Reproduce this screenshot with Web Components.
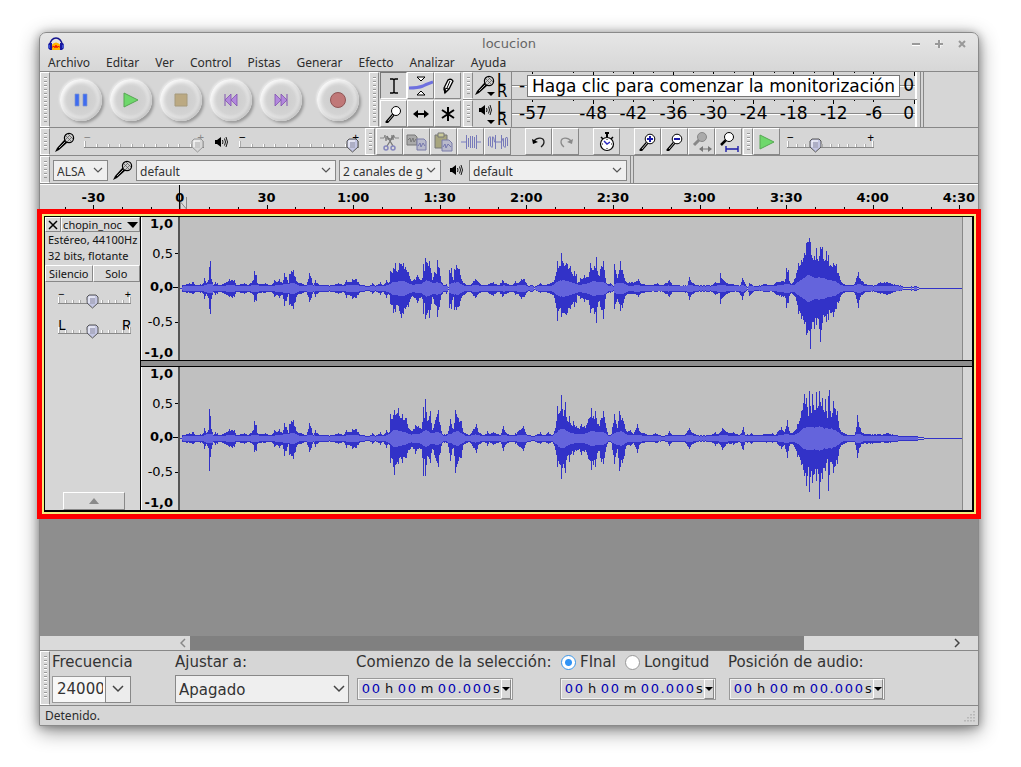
<!DOCTYPE html>
<html lang="es">
<head>
<meta charset="utf-8">
<title>locucion</title>
<style>
  html, body { margin: 0; height: 100%; background: #fff; }
  body {
    display: flex;
    box-sizing: border-box;
    padding: 32px 42px 41px 39px;
    overflow: hidden;
    font-family: "Noto Sans", "Open Sans", sans-serif;
    font-size: 12px;
    color: #2c2c2c;
  }
</style>
</head>
<body>
<audio-window></audio-window>

<script>
const define = (name, html, setup) => {
  const template = document.createElement('template');
  template.innerHTML = html;
  customElements.define(name, class extends HTMLElement {
    constructor() {
      super();
      this.attachShadow({ mode: 'open' });
    }
    connectedCallback() {
      if (this.shadowRoot.childNodes.length) return;
      this.shadowRoot.append(template.content.cloneNode(true));
      if (setup) setup(this, this.shadowRoot);
    }
  });
};

const LENS = '<path d="M2 17 8 10" stroke="#000" stroke-width="3" stroke-linecap="round"/><path d="M3 16 8 10" stroke="#bbb" stroke-width="1"/>';

// every icon is [width, height, body]
const ICONS = {
  logo: [18, 18, '<path d="M3 10a6 7 0 0 1 12 0" fill="none" stroke="#12128c" stroke-width="1.500"/><path d="M4.500 15V10Q9 5 13.500 10v5z" fill="#ffb400"/><path d="M4 12h2l1-1 1 2 1-3 1 3 1-2 1 1h2" fill="none" stroke="#f01800"/><path d="M2 8h3v7H3l-2-2v-3zM16 8h-3v7h2l2-2v-3z" fill="#1717a0"/><path d="M2 10v3M16 10v3" stroke="#6d8df5"/>'],
  min: [10, 10, '<path d="M1 6.500h8" stroke="#fff" stroke-width="1"/><path d="M1 5h8" stroke="#999" stroke-width="2"/>'],
  max: [10, 10, '<path d="M1 6h8M6 1v8" stroke="#fff"/><path d="M1 5h8M5 1v8" stroke="#999" stroke-width="2"/>'],
  close: [10, 10, '<path d="m2 2 6 6m0-6L2 8" stroke="#999" stroke-width="2"/>'],
  pause: [16, 16, '<path d="M2 2h4v12H2zM10 2h4v12h-4z" fill="#3f6cf0" stroke="#8095cf" stroke-width=".7"/>'],
  play: [16, 16, '<path d="M1 1v14l14-7z" fill="#6ed86b" stroke="#56a653"/>'],
  stop: [16, 16, '<path d="M2 2h12v12H2z" fill="#bba982" stroke="#a69a7c"/>'],
  prev: [16, 16, '<path d="M2 2v12" stroke="#8152b0"/><path d="m8 2-6 6 6 6zM14 2 8 8l6 6z" fill="#b288dc" stroke="#8152b0" stroke-width=".8"/>'],
  next: [16, 16, '<path d="M14 2v12" stroke="#8152b0"/><path d="m8 2 6 6-6 6zM2 2l6 6-6 6z" fill="#b288dc" stroke="#8152b0" stroke-width=".8"/>'],
  record: [16, 16, '<circle cx="8" cy="8" r="7.500" fill="#c07878" stroke="#8f5555"/>'],
  ibeam: [20, 20, '<path d="M6 3h3l1 1 1-1h3M6 17h3l1-1 1 1h3M10 4v12" fill="none" stroke="#000" stroke-width="1.400"/>'],
  envelope: [24, 22, '<path d="M0 13q9 0 14-2 4-2 10-4" fill="none" stroke="#6e70df" stroke-width="3"/><path d="M8 2h8l-4 4zM8 20h8l-4-4z" fill="#fff" stroke="#000"/>'],
  pencil: [20, 20, '<path d="m7 17-1-5 4-8q3-2 5 1l-4 8-4 4z" fill="#fff" stroke="#000" stroke-width="1.300"/><path d="m9 12 3-7M6 12l5 1M7 17l1-3-2-1z" fill="#000" stroke="#000"/>'],
  lens: [18, 18, LENS + '<circle cx="11" cy="6" r="4.500" fill="#fff" stroke="#000"/>'],
  shift: [18, 12, '<path d="M3 6h12" stroke="#000" stroke-width="2"/><path d="m1 6 5-4v8zM17 6l-5-4v8z"/>'],
  star: [16, 16, '<path d="M8 1v14M2 4l12 8M14 4 2 12" stroke="#000" stroke-width="2"/>'],
  mic: [20, 20, '<path d="m0 20 2-4 8-9 3 3-9 8z" fill="#000"/><path d="m4 16 7-7" stroke="#aaa"/><circle cx="14" cy="6" r="4.600" fill="#ccc" stroke="#000" stroke-width="1.200"/><path d="m11 4 5 5M13 2l5 5M15 3l-5 5M17 5l-5 5" stroke="#555" stroke-width=".7"/>'],
  speaker: [14, 14, '<path d="M1 5h2l4-3v10L3 9H1z"/><path d="M8.500 5q1 2 0 4M10.500 3.500q2 3.500 0 7M12 2q3 5 0 10" fill="none" stroke="#000" stroke-width=".9"/>'],
  down: [8, 4, '<path d="M0 0h8L4 4z"/>'],
  cut: [22, 20, '<path d="M1 6h4l1-3 1 6 1-5 1 4 2-2 1 2 1-5 1 5 1-4 1 2h4" fill="none" stroke="#888"/><path d="m8 14 7-11M14 14 8 4" stroke="#777" stroke-width="1.300"/><circle cx="7" cy="16" r="2" fill="none" stroke="#8486bd" stroke-width="1.500"/><circle cx="14" cy="16" r="2" fill="none" stroke="#8486bd" stroke-width="1.500"/>'],
  copy: [22, 20, '<path d="M1 3h8l2 2v8H1z" fill="#aaa" stroke="#777"/><path d="m2 8 2-2 1 4 2-4 1 4 2-3" fill="none" stroke="#777"/><path d="M11 7h7l2 2v9h-9z" fill="#b9bacb" stroke="#787aa8"/><path d="m12 14 2-3 1 4 2-4 2 3" fill="none" stroke="#7577ad"/>'],
  paste: [22, 20, '<path d="M2 3h12v13H2z" fill="#a7a57e" stroke="#777"/><path d="M5 1h6v4H5z" fill="#c9c99a" stroke="#777"/><path d="M9 8h7l3 3v8H9z" fill="#b9bacb" stroke="#787aa8"/><path d="m10 15 2-3 1 4 2-4 3 3" fill="none" stroke="#7577ad"/>'],
  trim: [22, 20, '<path d="M1 10h5M17 10h4" stroke="#777ac0"/><path d="M6.500 3v14M8.500 6v9M10.500 4v12M12.500 4v12M14.500 5v11M16.500 3v14" stroke="#777aba"/>'],
  silence: [22, 20, '<path d="M1.500 14V6q2-3 2 0v8q2 3 2 0V5q1-2 2 5h7M8.500 3v14M14.500 3v14M14.500 10l1-3q1-2 1 1v6q2 3 2 0V6q2-2 2 1v7" fill="none" stroke="#777aba"/>'],
  undo: [20, 18, '<path d="M5 8c3-4 10-4 10 1q0 3-3 5" fill="none" stroke="#222" stroke-width="1.300"/><path d="m3 6 1 5 5-2z"/>'],
  redo: [20, 18, '<path d="M15 8C12 4 5 4 5 9q0 3 3 5" fill="none" stroke="#8a8a8a" stroke-width="1.300"/><path d="m17 6-1 5-5-2z" fill="#8a8a8a"/>'],
  timer: [20, 20, '<path d="M8 1h4M10 1v4" stroke="#000" stroke-width="2"/><path d="m4 5 2 2M16 5l-2 2" stroke="#000" stroke-width="1.500"/><circle cx="10" cy="12" r="6.500" fill="#fff" stroke="#000" stroke-width="1.200"/><path d="M10 7v1m0 8v1m-5-5h1m8 0h1" stroke="#111"/><path d="m7 9 3 3 3-2" fill="none" stroke="#2a2ac0" stroke-width="1.500"/>'],
  zoomin: [18, 18, LENS + '<circle cx="11" cy="6" r="4.800" fill="#fff" stroke="#000"/><path d="M8 6h6M11 3v6" stroke="#1a1aa8" stroke-width="2"/>'],
  zoomout: [18, 18, LENS + '<circle cx="11" cy="6" r="4.800" fill="#fff" stroke="#000"/><path d="M8 6h6" stroke="#1a1aa8" stroke-width="2"/>'],
  zoomsel: [20, 20, '<path d="m2 13 5-5" stroke="#888" stroke-width="3"/><circle cx="10" cy="5" r="4.500" fill="#aaa" stroke="#888"/><path d="M8 17h11" stroke="#777"/><path d="m7 17 4-3v6zM20 17l-4-3v6z" fill="#777"/>'],
  zoomfit: [20, 20, '<path d="m2 13 5-5" stroke="#000" stroke-width="2.500"/><circle cx="10" cy="5" r="4.500" fill="#fff" stroke="#000"/><path d="M7 17h12M7 14v6M19 14v6" stroke="#1a1aa8" stroke-width="1.400"/>'],
  cross: [10, 10, '<path d="m1 1 8 8m0-8L1 9" stroke="#000" stroke-width="1.500"/>'],
  bigdown: [11, 6, '<path d="M0 0h11L6 6z"/>'],
  up: [10, 6, '<path d="M0 6h10L5 0z" fill="#8a8a8a"/>'],
  left: [6, 10, '<path d="M5 1 1 5l4 4" fill="none" stroke="#888" stroke-width="1.500"/>'],
  right: [6, 10, '<path d="m1 1 4 4-4 4" fill="none" stroke="#444" stroke-width="1.500"/>'],
  chevron: [12, 8, '<path d="m2 2 4 4 4-4" fill="none" stroke="#555" stroke-width="1.200"/>'],
  bigchevron: [12, 8, '<path d="m1 1 5 5 5-5" fill="none" stroke="#444" stroke-width="1.500"/>'],
  corner: [12, 12, '<path d="M10 1v2M7 4v2m3-2v2M4 7v2m3-2v2m3-2v2M1 10v2m3-2v2m3-2v2m3-2v2" stroke="#b0b0b0" stroke-width="1.500" stroke-dasharray="1.500"/>'],
};

define('app-icon', `
  <style>
    :host { display: inline-flex; flex: none; }
    svg { display: block; }
  </style>
`, (host, root) => {
  const [w, h, body] = ICONS[host.getAttribute('name')];
  root.innerHTML += `<svg width="${w}" height="${h}" viewBox="0 0 ${w} ${h}" aria-hidden="true">${body}</svg>`;
});

define('tool-grip', `
  <style>
    :host {
      display: block;
      flex: none;
      box-sizing: border-box;
      width: 10px;
      align-self: stretch;
      padding: 4px 2px 4px 3px;
      background: #d9d9d9;
      border: 1px solid #fff;
      border-right: 1px solid #888;
    }
    div {
      height: 100%;
      background: repeating-linear-gradient(#999 0 1px, #fff 1px 2px, #d9d9d9 2px 4px);
    }
  </style>
  <div></div>
`);

define('round-button', `
  <style>
    :host { display: block; flex: none; }
    button {
      display: flex;
      align-items: center;
      justify-content: center;
      width: 42px;
      height: 42px;
      padding: 0;
      border: none;
      border-radius: 50%;
      background: radial-gradient(circle at 50% 50%, #cbcbcb 0, #d3d3d3 48%, #e4e4e4 62%, #dadada 71%);
      box-shadow: -1px -1px 2px #ececec, 2px 2px 3px #969696, inset 2px 2px 3px #f8f8f8, inset -2px -2px 3px #c8c8c8;
    }
  </style>
  <button type="button"><slot></slot></button>
`, (host, root) => {
  root.querySelector('button').setAttribute('aria-label', host.getAttribute('label'));
});

define('tool-button', `
  <style>
    :host { display: block; flex: none; width: 27px; height: 27px; }
    button {
      display: flex;
      align-items: center;
      justify-content: center;
      box-sizing: border-box;
      width: 100%;
      height: 100%;
      padding: 0;
      background: #d8d8d8;
      border: 1px solid;
      border-color: #fff #888 #888 #fff;
      font: inherit;
      color: inherit;
    }
    :host([pressed]) button { background: #d2d2d2; border-color: #777 #fff #fff #777; }
  </style>
  <button type="button"><slot></slot></button>
`, (host, root) => {
  const label = host.getAttribute('label');
  if (label) root.querySelector('button').setAttribute('aria-label', label);
});

const knob = (fill, edge) => `url("data:image/svg+xml,${encodeURIComponent(
  `<svg xmlns="http://www.w3.org/2000/svg" width="13" height="15"><path d="M3 1h7l2 2v6l-5.500 5L1 9V3z" fill="${fill}" stroke="${edge}"/><path d="M4 5h5M4 7h5M4 9h5" stroke="${edge}" stroke-opacity=".4"/><path d="M3 9V3h6" fill="none" stroke="#fff"/></svg>`)}")`;

define('level-slider', `
  <style>
    :host { display: grid; flex: none; width: 120px; height: 22px; }
    .ends, .scale, input { grid-area: 1 / 1; min-width: 0; }
    .ends { display: flex; justify-content: space-between; line-height: 14px; color: #000; }
    :host([muted]) .ends { color: #888; }
    .scale {
      align-self: end;
      height: 6px;
      margin-bottom: 5px;
      border-bottom: 1px solid #888;
      display: flex;
      justify-content: space-between;
      align-items: flex-end;
    }
    .scale i { width: 1px; height: 3px; background: #aaa; border-left: 1px solid #fff; }
    .scale i:first-child, .scale i:last-child { height: 6px; }
    input {
      appearance: none;
      align-self: end;
      width: 100%;
      height: 15px;
      margin: 0;
      background: none;
    }
    input::-webkit-slider-thumb {
      appearance: none;
      width: 13px;
      height: 15px;
      border: none;
      background: ${knob('#c3c5e2', '#555')};
    }
    input:disabled::-webkit-slider-thumb { background: ${knob('#d6d6d6', '#999')}; }
  </style>
  <div class="ends"><span></span><span></span></div>
  <div class="scale"></div>
  <input type="range" min="0" max="100">
`, (host, root) => {
  const [low, high] = root.querySelectorAll('span');
  low.textContent = host.getAttribute('low') || '−';
  high.textContent = host.getAttribute('high') || '+';
  root.querySelector('.scale').innerHTML = '<i></i>'.repeat(+host.getAttribute('ticks') || 11);
  const input = root.querySelector('input');
  input.value = host.getAttribute('value');
  input.disabled = host.hasAttribute('muted');
  input.setAttribute('aria-label', host.getAttribute('label'));
});

define('pick-list', `
  <style>
    :host { display: grid; flex: none; font-size: 12px; height: 20px; }
    select, app-icon { grid-area: 1 / 1; }
    select {
      appearance: none;
      box-sizing: border-box;
      width: 100%;
      height: 100%;
      padding: 2px 15px 0 3px;
      border: 1px solid #888;
      border-radius: 0;
      background: #efefef;
      font: inherit;
      color: #333;
    }
    app-icon { justify-self: end; align-self: center; margin-right: 4px; pointer-events: none; z-index: 1; }
  </style>
  <select><option></option></select>
`, (host, root) => {
  root.querySelector('option').textContent = host.getAttribute('value');
  root.querySelector('select').setAttribute('aria-label', host.getAttribute('label'));
  const icon = document.createElement('app-icon');
  icon.setAttribute('name', host.hasAttribute('large') ? 'bigchevron' : 'chevron');
  root.append(icon);
});

define('level-meter', `
  <style>
    :host { display: flex; flex: 1; min-height: 0; border-bottom: 1px solid #888; }
    :host(.last) { border-bottom: none; }
    .source {
      display: flex;
      flex-direction: column;
      align-items: center;
      width: 24px;
      padding-top: 3px;
      box-sizing: border-box;
      position: relative;
    }
    .drop { position: absolute; right: 2px; bottom: 3px; }
    .sides {
      display: flex;
      flex-direction: column;
      justify-content: center;
      width: 13px;
      margin-right: 1px;
      font: 15px/12px "DejaVu Sans", sans-serif;
      color: #000;
    }
    .scale {
      flex: 1;
      display: grid;
      grid-template-columns: 61fr repeat(8, 40fr) 21fr;
      border-left: 1px solid #888;
      border-right: 2px solid #fff;
      background: linear-gradient(#fff, #fff) 0 14px / 100% 1px no-repeat, linear-gradient(#888, #888) 0 13px / 100% 1px no-repeat;
      font: 17px/27px "DejaVu Sans", sans-serif;
      color: #000;
    }
    .scale span {
      text-align: center;
      background: linear-gradient(#000, #000) 50% 0 / 1px 2px no-repeat, linear-gradient(#000, #000) 0 0 / 1px 1px no-repeat;
    }
    .scale span.major { background-size: 1px 4px, 1px 1px; }
    .scale span:first-child { text-align: left; padding-left: 7px; background-position: 20px 0; }
    .scale span:last-child { text-align: right; padding-right: 1px; background-position: 100% 0; }
  </style>
  <tool-grip></tool-grip>
  <div class="source"><app-icon class="drop" name="down"></app-icon></div>
  <div class="sides"><span>L</span><span>R</span></div>
  <div class="scale"></div>
`, (host, root) => {
  const icon = document.createElement('app-icon');
  icon.setAttribute('name', host.getAttribute('icon'));
  root.querySelector('.source').prepend(icon);
  // an idle meter keeps its ticks but only the ends of its scale
  const idle = host.hasAttribute('idle');
  root.querySelector('.scale').innerHTML = [-57, -48, -42, -36, -30, -24, -18, -12, -6, 0]
    .map((db) => {
      const text = !idle || db === 0 ? db : db === -57 ? '-' : '';
      return `<span${db % 12 === 0 ? ' class="major"' : ''}>${text}</span>`;
    }).join('');
});

define('time-ruler', `
  <style>
    :host {
      display: grid;
      grid-template-columns: 100fr repeat(10, 866fr) 620fr;
      height: 30px;
      border-top: 1px solid #fff;
      box-sizing: border-box;
      font: bold 13px/26px "DejaVu Sans", sans-serif;
      color: #000;
    }
    svg, .labels { grid-area: 1 / 1 / 2 / -1; }
    svg { width: 100%; height: 24px; }
    .labels { display: grid; grid-template-columns: subgrid; text-align: center; }
    .labels span:first-child { grid-column: 2; }
    .labels span { min-width: 0; }
    .labels span:last-child { text-align: right; padding-right: 3px; }
  </style>
  <svg viewBox="0 0 938 24" preserveAspectRatio="none"></svg>
  <div class="labels"></div>
`, (host, root) => {
  let d = '';
  for (let i = -4; i < 28; i++) {
    d += `M${Math.round(140 + i * 28.87) + 0.5} 24v${i % 3 === 0 ? -4 : -2}`;
  }
  root.querySelector('svg').innerHTML =
    `<path d="${d}" stroke="#000"/><path d="M139.500 0v24" stroke="#000"/><path d="M146.500 12v12l-6-7v7" fill="#ddd" stroke="#888"/>`;
  root.querySelector('.labels').innerHTML = ['-30', '0', '30', '1:00', '1:30', '2:00', '2:30', '3:00', '3:30', '4:00', '4:30']
    .map((t) => `<span>${t}</span>`).join('');
});

// envelopes: x, height above the centre line, height below it
const QUIET = '2 3 3,13 6 5,17 3 3,23 5 5,24 10 10,26 5 5,28 8 9,29 21 20,30 27 25,31 9 10,33 3 3,35 6 6,37 5 5,40 3 3,46 6 6,49 9 8,52 8 9,54 8 8,56 3 3,64 5 5,68 3 3,73 8 6,74 17 13,76 13 12,77 5 5,81 4 4,85 5 4,91 3 3,94 8 8,97 6 6,99 9 9,102 5 6,104 15 17,106 11 12,108 5 5,109 14 16,111 17 17,113 18 20,115 11 13,117 6 6,121 5 5,126 3 3,129 15 13,131 10 9,133 3 3,135 8 8,138 4 4,150 3 3,158 5 5,163 3 3,166 8 9,169 6 6,172 9 10,176 9 9,179 4 4,184 3 3,188 2 2,192 5 5,195 2 2,200 6 6,203 3 3,206 8 9,209 6 6';
const LEFT = '210 17 15,213 20 24,215 25 23,217 16 16,219 25 22,221 24 29,223 25 25,225 21 20,228 16 18,230 9 10,234 9 9,237 13 14,240 8 9,242 10 10,243 24 25,244 17 14,245 30 30,248 22 21,249 27 29,251 15 15,252 8 8,254 16 15,256 14 17,257 28 28,259 20 18,261 6 6,264 3 3,266 4 5,268 1 1,269 18 19,271 20 20,273 8 8,274 19 21,276 23 21,278 19 18,279 19 17,281 9 9,284 5 6,289 3 3,295 9 9,299 5 4,304 3 3,313 6 7,318 3 3,322 8 8,326 5 5,332 3 3,335 7 6,338 5 5,341 9 10,344 9 8,347 3 3,352 3 3,354 1 1,360 5 4,364 3 3,370 5 5,374 8 9,377 27 32,379 22 20,381 35 28,384 22 24,386 25 26,390 22 20,392 14 15,394 17 18,396 14 14,397 5 6,400 10 10,404 13 13,408 11 11,410 25 24,414 22 25,416 31 34,418 13 13,421 22 21,423 27 30,425 10 10,427 4 4,430 5 4,433 2 2,434 24 20,437 10 10,440 27 22,442 18 19,444 10 10,446 6 6,454 6 5,458 9 8,462 4 4,470 3 3,477 5 3,482 3 3,489 8 8,492 3 3,507 3 4,509 11 11,512 5 5,517 3 3,531 3 3,535 6 6,539 5 4,540 15 15,542 9 9,547 5 5,552 4 3,558 3 3,560 3 6,562 10 11,564 6 4,567 1 1,569 5 7,575 2 2,585 4 3,592 3 3,596 6 6,601 7 8,605 9 9,606 20 19,608 18 14,609 7 7,612 5 5,616 15 12,618 25 25,621 28 30,624 35 35,626 45 46,629 50 42,630 46 60,632 30 33,634 32 40,636 40 36,639 32 40,640 41 53,642 41 34,644 27 28,646 37 33,648 33 31,650 23 24,653 25 28,656 24 20,659 12 12,662 5 5,668 3 3,674 4 4,676 10 10,678 16 19,680 9 8,682 7 6,685 4 3,694 3 3,700 6 5,706 6 6,712 4 4,718 3 2,720 3 2,723 1 1,736 2 2,738 1 1,740 0 0';
const RIGHT = '210 24 24,212 19 20,214 28 36,218 30 25,220 20 18,222 24 24,226 20 19,229 9 11,233 9 10,235 13 15,238 12 10,241 9 10,243 31 37,244 20 20,245 39 37,247 17 17,250 27 24,252 8 10,255 18 19,258 28 28,260 13 14,262 4 4,267 4 4,270 19 22,273 9 9,275 28 34,278 20 22,281 17 19,283 6 6,290 4 4,296 14 14,298 6 6,304 3 3,307 7 7,309 4 3,313 6 6,320 3 3,323 12 12,326 5 5,333 3 3,338 7 7,343 12 12,346 4 4,353 2 2,360 6 5,363 3 3,368 6 5,372 3 3,375 10 11,377 32 28,379 25 25,381 43 40,383 22 25,385 36 34,387 17 17,389 22 23,391 13 15,393 17 16,397 10 11,401 14 16,406 13 13,408 19 20,411 30 31,413 22 26,415 27 28,418 14 12,421 20 23,423 27 25,426 10 8,428 3 3,431 4 4,434 24 25,437 10 10,439 27 32,442 20 24,444 14 17,446 7 7,450 8 7,453 4 4,457 14 14,459 7 6,464 5 4,468 3 3,475 5 4,480 3 3,486 3 3,489 7 7,492 3 3,505 4 4,509 10 10,513 5 5,518 3 3,530 3 3,535 6 7,538 4 4,542 10 11,547 6 5,553 6 6,559 3 3,562 8 10,563 11 11,565 3 3,571 5 5,575 3 3,592 5 4,595 3 3,601 11 10,604 6 6,607 18 19,609 7 7,613 6 6,617 14 18,621 27 26,624 44 37,626 40 47,628 22 28,629 47 53,631 25 32,632 44 44,634 28 35,636 46 42,638 32 35,639 47 60,641 32 34,642 40 40,644 26 29,645 39 32,647 20 20,648 42 52,649 48 36,651 21 23,653 37 34,655 29 27,657 27 25,659 10 10,664 5 5,674 3 3,676 11 11,677 23 19,680 10 8,682 5 5,690 4 5,700 4 4,707 5 4,715 3 3,723 2 2,736 2 2,742 1 1,746 0 0';
const ENVELOPES = {
  left: `${QUIET},${LEFT}`,
  right: `${QUIET.replace('29 21 20,30 27 25', '29 29 32,30 22 18')},${RIGHT}`,
};

define('wave-view', `
  <style>
    :host { display: block; min-height: 0; min-width: 0; background: #c0c0c0; }
    svg { display: block; width: 100%; height: 100%; }
  </style>
`, (host, root) => {
  const points = ENVELOPES[host.getAttribute('channel')].split(',').map((p) => p.split(' ').map(Number));
  const top = [];
  const low = [];
  let seed = 7;
  for (let x = 0, k = 0; x < 782; x++) {
    while (k < points.length - 2 && points[k + 1][0] <= x) k++;
    const [x0, u0, d0] = points[k];
    const [x1, u1, d1] = points[k + 1];
    const t = Math.min(1, Math.max(0, (x - x0) / (x1 - x0)));
    seed = (seed * 1103515245 + 12345) % 2147483648;
    // samples between the listed peaks sit a little lower
    const dip = x === x0 ? 1 : 0.76 + 0.24 * (seed / 2147483648);
    top.push(x < 2 ? 0 : (u0 + (u1 - u0) * t) * dip);
    low.push(x < 2 ? 0 : (d0 + (d1 - d0) * t) * dip);
  }
  let peak = 'M0 72h782v-1H0z';
  let body = '';
  for (let x = 0; x < 782; x++) {
    const u = Math.round(top[x]);
    const d = Math.round(low[x]);
    if (!u && !d) continue;
    peak += `M${x} ${71 - u}h1V${72 + d}h-1z`;
    let sum = 0;
    for (let n = -3; n <= 3; n++) sum += (top[x + n] || 0) + (low[x + n] || 0);
    const r = Math.min(Math.max(u, d) - 1, Math.round(1 + sum / 14 * 0.27));
    if (r > 0) body += `M${x} ${71 - r}h1V${72 + r}h-1z`;
  }
  root.innerHTML += `<svg viewBox="0 0 782 143" preserveAspectRatio="none" shape-rendering="crispEdges" role="img" aria-label="Onda"><path d="${peak}" fill="#3232c8"/><path d="${body}" fill="#6464dc"/></svg>`;
});

define('amp-ruler', `
  <style>
    :host {
      display: grid;
      grid-template-rows: 15fr 45fr 23fr 48fr 12fr;
      align-items: center;
      justify-items: end;
      font: 13px/14px "DejaVu Sans", sans-serif;
      color: #000;
      border-right: 2px solid #555;
      border-left: 1px solid #fff;
      background: #d6d6d6;
    }
    b, span { padding-right: 5px; }
    b:last-child { align-self: end; }
    .tick { background: linear-gradient(#000, #000) 100% 50% / 3px 1px no-repeat; }
    b.tick { background-size: 5px 1px; }
  </style>
  <b>1,0</b><span class="tick">0,5</span><b class="tick">0,0</b><span class="tick">-0,5</span><b>-1,0</b>
`);

define('track-controls', `
  <style>
    :host {
      display: flex;
      flex-direction: column;
      background: #d6d6d6;
      border-right: 1px solid #000;
      font-size: 11px;
      color: #111;
    }
    .head, .pair { display: flex; }
    .head { height: 15px; }
    .pair { height: 17px; margin-top: 1px; }
    tool-button { height: 100%; }
    .head tool-button:first-child { width: 16px; }
    .head tool-button:last-child, .pair tool-button { flex: 1; min-width: 0; }
    .name { line-height: 12px; white-space: nowrap; }
    .head app-icon[name=bigdown] { margin-left: 5px; }
    p { margin: 0; padding: 0 0 0 3px; line-height: 16px; white-space: nowrap; }
    .mix { display: flex; flex-direction: column; gap: 8px; padding: 5px 9px 0 13px; }
    .mix level-slider { width: 100%; }
    .pan { font-size: 15px; }
    .fold { margin: auto 15px 0 18px; height: 18px; }
    .fold tool-button { width: 100%; }
  </style>
  <div class="head">
    <tool-button label="Cerrar pista"><app-icon name="cross"></app-icon></tool-button>
    <tool-button><span class="name">chopin_noc</span><app-icon name="bigdown"></app-icon></tool-button>
  </div>
  <p>Estéreo, 44100Hz</p>
  <p>32 bits, flotante</p>
  <div class="pair">
    <tool-button>Silencio</tool-button>
    <tool-button>Solo</tool-button>
  </div>
  <div class="mix">
    <level-slider ticks="11" value="47" label="Ganancia"></level-slider>
    <level-slider class="pan" ticks="11" value="47" low="L" high="R" label="Balance"></level-slider>
  </div>
  <div class="fold"><tool-button label="Contraer"><app-icon name="up"></app-icon></tool-button></div>
`);

define('track-panel', `
  <style>
    :host {
      display: grid;
      grid-template-columns: 96px 39px 1fr 10px;
      grid-template-rows: 143px 7px 143px;
      margin: 0 2px;
      border: 2px solid #f5ee7c;
      outline: 5px solid #f00;
      position: relative;
      z-index: 1;
      background: #000;
      padding: 1px 2px 2px 1px;
    }
    track-controls { grid-row: 1 / -1; }
    .gap { grid-column: 2 / -1; background: #8e8e8e; border: 1px solid #000; border-width: 1px 0; }
    .tail { background: #d6d6d6; border-left: 1px solid #888; }
  </style>
  <track-controls></track-controls>
  <amp-ruler></amp-ruler>
  <wave-view channel="left"></wave-view>
  <div class="tail"></div>
  <div class="gap"></div>
  <amp-ruler></amp-ruler>
  <wave-view channel="right"></wave-view>
  <div class="tail"></div>
`);

define('time-field', `
  <style>
    :host {
      display: inline-flex;
      align-items: center;
      box-sizing: border-box;
      height: 22px;
      margin-left: 1px;
      padding: 0 1px 0 3px;
      border: 1px solid #999;
      box-shadow: inset 0 0 0 1px #f4f4f4;
      font: 13px/18px "DejaVu Sans", sans-serif;
      color: #111;
    }
    span { width: 10px; text-align: center; color: #0000b4; }
    .dot { width: 5px; }
    .h, .m, .s { color: #111; }
    .h { width: 16px; }
    .m { width: 20px; }
    .s { width: 9px; }
    tool-button { width: 10px; height: 20px; }
  </style>
  <span>0</span><span>0</span><span class="h">h</span><span>0</span><span>0</span><span class="m">m</span><span>0</span><span>0</span><span class="dot">.</span><span>0</span><span>0</span><span>0</span><span class="s">s</span>
  <tool-button label="Formato"><app-icon name="down"></app-icon></tool-button>
`);

define('selection-bar', `
  <style>
    :host {
      display: flex;
      height: 54px;
      border-top: 1px solid #888;
      border-bottom: 1px solid #888;
      font: 15px/20px "DejaVu Sans", sans-serif;
      color: #333;
    }
    .cells {
      flex: 1;
      display: grid;
      grid-template-columns: 123px 181px 203px 169px 1fr;
      grid-template-rows: 22px 32px;
      align-items: center;
      padding-left: 2px;
      white-space: nowrap;
    }
    .combo { display: flex; width: 79px; height: 27px; }
    .combo input {
      flex: 1;
      min-width: 0;
      box-sizing: border-box;
      padding: 0 2px 0 4px;
      border: 1px solid #999;
      border-right: none;
      background: #f7f7f7;
      font: inherit;
      color: inherit;
    }
    .combo button {
      display: flex;
      align-items: center;
      justify-content: center;
      width: 26px;
      padding: 0;
      border: 1px solid #888;
      background: #ececec;
    }
    pick-list { width: 174px; height: 28px; font-size: 15px; }
    .ends { display: flex; align-items: center; gap: 9px; padding-left: 2px; }
    .ends label { display: flex; align-items: center; gap: 4px; }
    .ends input {
      appearance: none;
      width: 15px;
      height: 15px;
      margin: 0;
      border: 1px solid #999;
      border-radius: 50%;
      background: #fff;
    }
    .ends input:checked { border-color: #3b97ea; background: radial-gradient(circle, #3093f5 0 3px, #fff 4px); }
  </style>
  <tool-grip></tool-grip>
  <div class="cells">
    <label for="rate">Frecuencia</label>
    <span>Ajustar a:</span>
    <span>Comienzo de la selección:</span>
    <div class="ends">
      <label><input type="radio" name="end" checked>FInal</label>
      <label><input type="radio" name="end">Longitud</label>
    </div>
    <span>Posición de audio:</span>
    <div class="combo"><input id="rate" value="24000"><button type="button" aria-label="Frecuencias"><app-icon name="bigchevron"></app-icon></button></div>
    <pick-list large value="Apagado" label="Ajustar a"></pick-list>
    <div><time-field></time-field></div>
    <div><time-field></time-field></div>
    <div><time-field></time-field></div>
  </div>
`);

define('scroll-strip', `
  <style>
    :host { display: grid; grid-template-columns: 150fr 614fr 174fr; height: 14px; background: #dadada; }
    div { display: flex; align-items: center; justify-content: flex-end; }
    .thumb { background: #808080; }
    .start { padding-right: 4px; }
    .end { padding-right: 18px; }
  </style>
  <div class="start"><app-icon name="left"></app-icon></div>
  <div class="thumb"></div>
  <div class="end"><app-icon name="right"></app-icon></div>
`);

define('audio-window', `
  <style>
    :host {
      flex: 1;
      min-width: 0;
      display: flex;
      flex-direction: column;
      box-sizing: border-box;
      border: 1px solid #8a8a8a;
      border-radius: 7px 7px 0 0;
      background: linear-gradient(#e6e6e6, #d6d6d6 40px);
      box-shadow: 0 5px 20px rgba(0, 0, 0, .45), 0 1px 8px rgba(0, 0, 0, .3);
    }
    header { display: grid; grid-template-columns: 1fr auto 1fr; align-items: center; height: 21px; padding: 0 7px; }
    header h1 { margin: 0; font: 13px/20px "DejaVu Sans", sans-serif; color: #666; }
    header .buttons { display: flex; justify-content: flex-end; gap: 13px; margin-right: 4px; }
    header button, nav button { padding: 0; border: none; background: none; font: inherit; color: inherit; }
    header button { display: flex; }
    nav { display: flex; gap: 16px; height: 17px; padding: 0 8px; line-height: 17px; }
    .row { display: flex; align-items: center; border-top: 1px solid #888; height: 27px; }
    .top { height: 55px; }
    .transport { display: flex; gap: 8px; padding: 0 10px; }
    .transport round-button:last-child { margin-left: 7px; }
    .tools { display: grid; grid-template-columns: repeat(3, 27px); gap: 1px 0; padding-left: 1px; }
    .meters { display: flex; flex-direction: column; align-self: stretch; width: 454px; margin-left: 2px; position: relative; }
    .after { align-self: stretch; box-sizing: border-box; width: 4px; margin-left: 3px; border: 1px solid #888; border-width: 0 1px; }
    .tip {
      position: absolute;
      left: 64px;
      top: 3px;
      padding: 0 4px;
      border: 1px solid #777;
      background: #fff;
      font: 17px/20px "DejaVu Sans", sans-serif;
      color: #000;
      white-space: nowrap;
    }
    .group { display: flex; }
    .mixer { display: flex; align-items: center; gap: 9px; padding: 0 6px 0 5px; }
    .mixer app-icon:nth-of-type(2) { margin-left: 1px; }
    .mixer level-slider:last-child { margin-left: 2px; }
    .edit { gap: 14px; margin: 0 1px; }
    .speed { width: 87px; margin-left: 7px; }
    .device { gap: 3px; }
    .device app-icon[name=mic] { margin-left: 2px; }
    .device app-icon[name=speaker] { margin: 0 3px 0 5px; }
    .device .after { margin-left: 0; }
    .host { width: 55px; }
    .input { width: 200px; }
    .channels { width: 102px; }
    .output { width: 158px; }
    .board { flex: 1; background: #8e8e8e; }
    footer { display: flex; align-items: center; justify-content: space-between; height: 19px; padding: 0 2px 0 5px; line-height: 18px; }
    .rest { border-top: 1px solid #888; }
  </style>
  <header>
    <app-icon name="logo"></app-icon>
    <h1>locucion</h1>
    <div class="buttons">
      <button type="button" aria-label="Minimizar"><app-icon name="min"></app-icon></button>
      <button type="button" aria-label="Maximizar"><app-icon name="max"></app-icon></button>
      <button type="button" aria-label="Cerrar"><app-icon name="close"></app-icon></button>
    </div>
  </header>
  <nav>
    <button type="button">Archivo</button>
    <button type="button">Editar</button>
    <button type="button">Ver</button>
    <button type="button">Control</button>
    <button type="button">Pistas</button>
    <button type="button">Generar</button>
    <button type="button">Efecto</button>
    <button type="button">Analizar</button>
    <button type="button">Ayuda</button>
  </nav>
  <div class="row top">
    <tool-grip></tool-grip>
    <div class="transport">
      <round-button label="Pausa"><app-icon name="pause"></app-icon></round-button>
      <round-button label="Reproducir"><app-icon name="play"></app-icon></round-button>
      <round-button label="Detener"><app-icon name="stop"></app-icon></round-button>
      <round-button label="Inicio"><app-icon name="prev"></app-icon></round-button>
      <round-button label="Fin"><app-icon name="next"></app-icon></round-button>
      <round-button label="Grabar"><app-icon name="record"></app-icon></round-button>
    </div>
    <tool-grip></tool-grip>
    <div class="tools">
      <tool-button pressed label="Selección"><app-icon name="ibeam"></app-icon></tool-button>
      <tool-button label="Envolvente"><app-icon name="envelope"></app-icon></tool-button>
      <tool-button label="Dibujo"><app-icon name="pencil"></app-icon></tool-button>
      <tool-button label="Zoom"><app-icon name="lens"></app-icon></tool-button>
      <tool-button label="Desplazamiento"><app-icon name="shift"></app-icon></tool-button>
      <tool-button label="Multiherramienta"><app-icon name="star"></app-icon></tool-button>
    </div>
    <div class="meters">
      <level-meter icon="mic" idle></level-meter>
      <level-meter icon="speaker" class="last"></level-meter>
      <div class="tip" role="tooltip">Haga clic para comenzar la monitorización</div>
    </div>
    <div class="after"></div>
  </div>
  <div class="row">
    <tool-grip></tool-grip>
    <div class="mixer">
      <app-icon name="mic"></app-icon>
      <level-slider muted value="100" label="Volumen de grabación"></level-slider>
      <app-icon name="speaker"></app-icon>
      <level-slider value="100" label="Volumen de reproducción"></level-slider>
    </div>
    <tool-grip></tool-grip>
    <div class="group edit">
      <div class="group">
        <tool-button label="Cortar"><app-icon name="cut"></app-icon></tool-button>
        <tool-button label="Copiar"><app-icon name="copy"></app-icon></tool-button>
        <tool-button label="Pegar"><app-icon name="paste"></app-icon></tool-button>
        <tool-button label="Recortar"><app-icon name="trim"></app-icon></tool-button>
        <tool-button label="Silenciar"><app-icon name="silence"></app-icon></tool-button>
      </div>
      <div class="group">
        <tool-button label="Deshacer"><app-icon name="undo"></app-icon></tool-button>
        <tool-button label="Rehacer"><app-icon name="redo"></app-icon></tool-button>
      </div>
      <tool-button label="Temporizador"><app-icon name="timer"></app-icon></tool-button>
      <div class="group">
        <tool-button label="Acercar"><app-icon name="zoomin"></app-icon></tool-button>
        <tool-button label="Alejar"><app-icon name="zoomout"></app-icon></tool-button>
        <tool-button label="Ajustar selección"><app-icon name="zoomsel"></app-icon></tool-button>
        <tool-button label="Ajustar proyecto"><app-icon name="zoomfit"></app-icon></tool-button>
      </div>
    </div>
    <tool-grip></tool-grip>
    <tool-button label="Reproducir a velocidad"><app-icon name="play"></app-icon></tool-button>
    <level-slider class="speed" ticks="11" value="30" label="Velocidad"></level-slider>
  </div>
  <div class="row device">
    <tool-grip></tool-grip>
    <pick-list class="host" value="ALSA" label="Servidor de audio"></pick-list>
    <app-icon name="mic"></app-icon>
    <pick-list class="input" value="default" label="Dispositivo de grabación"></pick-list>
    <pick-list class="channels" value="2 canales de g" label="Canales"></pick-list>
    <app-icon name="speaker"></app-icon>
    <pick-list class="output" value="default" label="Dispositivo de reproducción"></pick-list>
    <div class="after"></div>
  </div>
  <div class="rest"><time-ruler></time-ruler></div>
  <track-panel></track-panel>
  <div class="board"></div>
  <scroll-strip></scroll-strip>
  <selection-bar></selection-bar>
  <footer><span>Detenido.</span><app-icon name="corner"></app-icon></footer>
`);
</script>
</body>
</html>
